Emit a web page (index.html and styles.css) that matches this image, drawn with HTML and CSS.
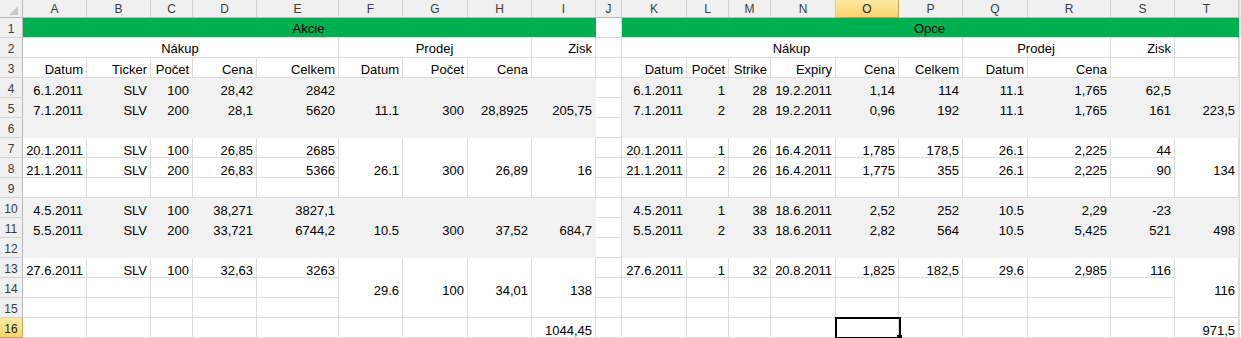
FILE: index.html
```html
<!DOCTYPE html>
<html lang="cs">
<head>
<meta charset="utf-8">
<title>Akcie a Opce</title>
<link rel="stylesheet" href="styles.css">
</head>
<body>
<div class="wrap">
<div class="sheet">
  <div class="corner"><svg width="23" height="18" viewBox="0 0 23 18"><polygon points="18,6 18,15 9,15" fill="#c9c9c9"/></svg></div>
  <div class="ch">A</div><div class="ch">B</div><div class="ch">C</div><div class="ch">D</div><div class="ch">E</div><div class="ch">F</div><div class="ch">G</div><div class="ch">H</div><div class="ch">I</div><div class="ch">J</div><div class="ch">K</div><div class="ch">L</div><div class="ch">M</div><div class="ch">N</div><div class="ch sel">O</div><div class="ch">P</div><div class="ch">Q</div><div class="ch">R</div><div class="ch">S</div><div class="ch">T</div>

  <div class="rh">1</div>
  <div class="c grn ctr s9 top">Akcie</div>
  <div class="c"></div>
  <div class="c grn ctr s10 top">Opce</div>

  <div class="rh">2</div>
  <div class="c ctr s5 top">Nákup</div>
  <div class="c ctr s3 top">Prodej</div>
  <div class="c top">Zisk</div>
  <div class="c"></div>
  <div class="c ctr s6 top">Nákup</div>
  <div class="c ctr s2 top">Prodej</div>
  <div class="c top">Zisk</div>
  <div class="c"></div>

  <div class="rh">3</div>
  <div class="c hd">Datum</div><div class="c hd">Ticker</div><div class="c hd">Počet</div><div class="c hd">Cena</div><div class="c hd">Celkem</div><div class="c hd">Datum</div><div class="c hd">Počet</div><div class="c hd">Cena</div><div class="c hd"></div>
  <div class="c"></div>
  <div class="c hd">Datum</div><div class="c hd">Počet</div><div class="c hd">Strike</div><div class="c hd">Expiry</div><div class="c hd">Cena</div><div class="c hd">Celkem</div><div class="c hd">Datum</div><div class="c hd">Cena</div><div class="c hd"></div><div class="c hd"></div>

  <div class="rh">4</div>
  <div class="c g">6.1.2011</div><div class="c g">SLV</div><div class="c g">100</div><div class="c g">28,42</div><div class="c g">2842</div>
  <div class="c g r3">11.1</div><div class="c g r3">300</div><div class="c g r3">28,8925</div><div class="c g r3">205,75</div>
  <div class="c"></div>
  <div class="c g">6.1.2011</div><div class="c g">1</div><div class="c g">28</div><div class="c g">19.2.2011</div><div class="c g">1,14</div><div class="c g">114</div><div class="c g">11.1</div><div class="c g">1,765</div><div class="c g">62,5</div>
  <div class="c g r3">223,5</div>

  <div class="rh">5</div>
  <div class="c g">7.1.2011</div><div class="c g">SLV</div><div class="c g">200</div><div class="c g">28,1</div><div class="c g">5620</div>
  <div class="c"></div>
  <div class="c g">7.1.2011</div><div class="c g">2</div><div class="c g">28</div><div class="c g">19.2.2011</div><div class="c g">0,96</div><div class="c g">192</div><div class="c g">11.1</div><div class="c g">1,765</div><div class="c g">161</div>

  <div class="rh">6</div>
  <div class="c g"></div><div class="c g"></div><div class="c g"></div><div class="c g"></div><div class="c g"></div>
  <div class="c"></div>
  <div class="c g"></div><div class="c g"></div><div class="c g"></div><div class="c g"></div><div class="c g"></div><div class="c g"></div><div class="c g"></div><div class="c g"></div><div class="c g"></div>

  <div class="rh">7</div>
  <div class="c">20.1.2011</div><div class="c">SLV</div><div class="c">100</div><div class="c">26,85</div><div class="c">2685</div>
  <div class="c r3">26.1</div><div class="c r3">300</div><div class="c r3">26,89</div><div class="c r3">16</div>
  <div class="c"></div>
  <div class="c">20.1.2011</div><div class="c">1</div><div class="c">26</div><div class="c">16.4.2011</div><div class="c">1,785</div><div class="c">178,5</div><div class="c">26.1</div><div class="c">2,225</div><div class="c">44</div>
  <div class="c r3">134</div>

  <div class="rh">8</div>
  <div class="c">21.1.2011</div><div class="c">SLV</div><div class="c">200</div><div class="c">26,83</div><div class="c">5366</div>
  <div class="c"></div>
  <div class="c">21.1.2011</div><div class="c">2</div><div class="c">26</div><div class="c">16.4.2011</div><div class="c">1,775</div><div class="c">355</div><div class="c">26.1</div><div class="c">2,225</div><div class="c">90</div>

  <div class="rh">9</div>
  <div class="c"></div><div class="c"></div><div class="c"></div><div class="c"></div><div class="c"></div>
  <div class="c"></div>
  <div class="c"></div><div class="c"></div><div class="c"></div><div class="c"></div><div class="c"></div><div class="c"></div><div class="c"></div><div class="c"></div><div class="c"></div>

  <div class="rh">10</div>
  <div class="c g">4.5.2011</div><div class="c g">SLV</div><div class="c g">100</div><div class="c g">38,271</div><div class="c g">3827,1</div>
  <div class="c g r3">10.5</div><div class="c g r3">300</div><div class="c g r3">37,52</div><div class="c g r3">684,7</div>
  <div class="c"></div>
  <div class="c g">4.5.2011</div><div class="c g">1</div><div class="c g">38</div><div class="c g">18.6.2011</div><div class="c g">2,52</div><div class="c g">252</div><div class="c g">10.5</div><div class="c g">2,29</div><div class="c g">-23</div>
  <div class="c g r3">498</div>

  <div class="rh">11</div>
  <div class="c g">5.5.2011</div><div class="c g">SLV</div><div class="c g">200</div><div class="c g">33,721</div><div class="c g">6744,2</div>
  <div class="c"></div>
  <div class="c g">5.5.2011</div><div class="c g">2</div><div class="c g">33</div><div class="c g">18.6.2011</div><div class="c g">2,82</div><div class="c g">564</div><div class="c g">10.5</div><div class="c g">5,425</div><div class="c g">521</div>

  <div class="rh">12</div>
  <div class="c g"></div><div class="c g"></div><div class="c g"></div><div class="c g"></div><div class="c g"></div>
  <div class="c"></div>
  <div class="c g"></div><div class="c g"></div><div class="c g"></div><div class="c g"></div><div class="c g"></div><div class="c g"></div><div class="c g"></div><div class="c g"></div><div class="c g"></div>

  <div class="rh">13</div>
  <div class="c">27.6.2011</div><div class="c">SLV</div><div class="c">100</div><div class="c">32,63</div><div class="c">3263</div>
  <div class="c r3">29.6</div><div class="c r3">100</div><div class="c r3">34,01</div><div class="c r3">138</div>
  <div class="c"></div>
  <div class="c">27.6.2011</div><div class="c">1</div><div class="c">32</div><div class="c">20.8.2011</div><div class="c">1,825</div><div class="c">182,5</div><div class="c">29.6</div><div class="c">2,985</div><div class="c">116</div>
  <div class="c r3">116</div>

  <div class="rh">14</div>
  <div class="c"></div><div class="c"></div><div class="c"></div><div class="c"></div><div class="c"></div>
  <div class="c"></div>
  <div class="c"></div><div class="c"></div><div class="c"></div><div class="c"></div><div class="c"></div><div class="c"></div><div class="c"></div><div class="c"></div><div class="c"></div>

  <div class="rh">15</div>
  <div class="c"></div><div class="c"></div><div class="c"></div><div class="c"></div><div class="c"></div>
  <div class="c"></div>
  <div class="c"></div><div class="c"></div><div class="c"></div><div class="c"></div><div class="c"></div><div class="c"></div><div class="c"></div><div class="c"></div><div class="c"></div>

  <div class="rh sel">16</div>
  <div class="c"></div><div class="c"></div><div class="c"></div><div class="c"></div><div class="c"></div><div class="c"></div><div class="c"></div><div class="c"></div><div class="c">1044,45</div>
  <div class="c"></div>
  <div class="c"></div><div class="c"></div><div class="c"></div><div class="c"></div><div class="c cur"></div><div class="c"></div><div class="c"></div><div class="c"></div><div class="c"></div><div class="c">971,5</div>
</div>
</div>
</body>
</html>
```

FILE: styles.css
```css
*, *::before, *::after { box-sizing: border-box; }

html, body {
  margin: 0;
  padding: 0;
  background: #fff;
  overflow: hidden;
}

body {
  font-family: "Liberation Sans", Arial, sans-serif;
  font-size: 13px;
  color: #000;
}

.wrap {
  width: 1241px;
  height: 338px;
  overflow: hidden;
  background: linear-gradient(to bottom, #f0f0f0 0, #f0f0f0 17px, #b9b9b9 17px, #b9b9b9 18px, #fff 18px);
}

.sheet {
  display: grid;
  grid-template-columns: 23px 64px 64px 42px 64px 82px 64px 65px 64px 64px 26px 65px 42px 42px 65px 63px 64px 65px 83px 64px 64px;
  grid-template-rows: 18px repeat(16, 20px);
  width: 1240px;
  border-right: 1px solid #dadcdd;
}

.corner {
  background: #f0f0f0;
  border-right: 1px solid #b9b9b9;
  border-bottom: 1px solid #b9b9b9;
}
.corner svg { display: block; }

.ch {
  background: #f0f0f0;
  border-right: 1px solid #cfcfcf;
  border-bottom: 1px solid #b9b9b9;
  color: #3b3b3b;
  font-size: 12px;
  display: flex;
  align-items: center;
  justify-content: center;
  line-height: 12px;
}

.rh {
  background: #f0f0f0;
  border-right: 1px solid #b9b9b9;
  border-bottom: 1px solid #d3d3d3;
  color: #3b3b3b;
  font-size: 12px;
  display: flex;
  align-items: center;
  justify-content: center;
  line-height: 12px;
  padding-top: 2px;
}

.ch.sel,
.rh.sel {
  background: linear-gradient(to bottom, #fde9a4, #f9d46c);
  border-color: #c7a458;
  color: #222;
}

.c {
  border-right: 1px solid #dadcdd;
  border-bottom: 1px solid #dadcdd;
  display: flex;
  align-items: flex-end;
  justify-content: flex-end;
  padding: 0 3px 0 2px;
  line-height: 13px;
  white-space: nowrap;
}

.ctr { justify-content: center; }
.top { padding-bottom: 2px; }
.hd { padding-bottom: 1px; }

.s2 { grid-column: span 2; }
.s3 { grid-column: span 3; }
.s5 { grid-column: span 5; }
.s6 { grid-column: span 6; }
.s9 { grid-column: span 9; }
.s10 { grid-column: span 10; }
.r3 { grid-row: span 3; padding-bottom: 20px; }

.g {
  background: #f2f2f2;
  border-color: #f2f2f2;
}

.grn {
  background: #00b050;
  border-right-color: #00b050;
}

.cur { position: relative; }
.cur::after {
  content: "";
  position: absolute;
  left: -1px;
  top: -1px;
  width: 66px;
  height: 22px;
  border: 2px solid #000;
}
.cur::before {
  content: "";
  position: absolute;
  left: 61px;
  top: 17px;
  width: 5px;
  height: 5px;
  background: #000;
  z-index: 1;
}
```
